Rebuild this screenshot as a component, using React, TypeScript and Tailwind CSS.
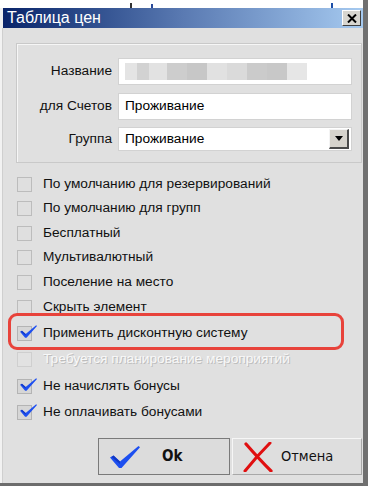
import React from "react";

type Row = { label: string; checked?: boolean; disabled?: boolean; mt: string };

const rows: Row[] = [
  { label: "По умолчанию для резервирований", mt: "mt-0" },
  { label: "По умолчанию для групп", mt: "mt-0" },
  { label: "Бесплатный", mt: "mt-px" },
  { label: "Мультивалютный", mt: "mt-0" },
  { label: "Поселение на место", mt: "mt-px" },
  { label: "Скрыть элемент", mt: "mt-px" },
  { label: "Применить дисконтную систему", checked: true, mt: "mt-[2px]" },
  { label: "Требуется планирование мероприятий", disabled: true, mt: "mt-[2px]" },
  { label: "Не начислять бонусы", checked: true, mt: "mt-[3px]" },
  { label: "Не оплачивать бонусами", checked: true, mt: "mt-[2px]" },
];

// blurred-out name in the first field
const blur = [
  { w: "w-[12px]", c: "bg-[#e4e4e4]" },
  { w: "w-[12px]", c: "bg-[#d2d2d2]" },
  { w: "w-[18px]", c: "bg-[#e2e2e2]" },
  { w: "w-[20px]", c: "bg-[#cdcdcd]" },
  { w: "w-[20px]", c: "bg-[#c7c7c7]" },
  { w: "w-[20px]", c: "bg-[#e1e1e1]" },
  { w: "w-[20px]", c: "bg-[#dadada]" },
  { w: "w-[20px]", c: "bg-[#cbcbcb]" },
  { w: "w-[20px]", c: "bg-[#c8c8c8]" },
  { w: "w-[20px]", c: "bg-[#e6e6e6]" },
];

function Tick({ className }: { className?: string }) {
  return (
    <svg viewBox="0 0 30 22" className={className}>
      <path d="M0 11.5 L3.5 9.5 L10 15.5 L28.5 0 L30 1.2 L11.5 22 L9 22 Z" fill="#1d4ff0" />
      <path d="M3.5 9.5 L10 15.5 L10 18 L1.5 11 Z" fill="#1238c4" />
    </svg>
  );
}

function CheckBox({ checked, disabled }: { checked?: boolean; disabled?: boolean }) {
  return (
    <div
      className={
        "relative w-[15px] h-[15px] shrink-0 border " +
        (disabled ? "border-[#cfcfcf] bg-[#e2e2e2]" : checked ? "border-[#b4b4b4] bg-[#d6d6d6]" : "border-[#bcbcbc] bg-[#dfdfdf]")
      }
    >
      {checked && <Tick className="absolute left-[2px] top-[-3px] w-[17px] h-[15px]" />}
    </div>
  );
}

function Field({ children }: { children?: React.ReactNode }) {
  return (
    <div className="w-[234px] h-[27px] bg-white border border-[#d2d2d2] flex items-center pl-[6px] text-[13.7px] text-black">
      {children}
    </div>
  );
}

export default function App() {
  return (
    <div className="relative w-[368px] h-[486px] bg-white overflow-hidden font-['Liberation_Sans','DejaVu_Sans',sans-serif]">
      <div className="flex h-full">
        <div className="flex-1 flex flex-col">
          {/* strip of the screen above the dialog */}
          <div className="h-[8px] bg-white relative">
            <div className="absolute left-[130px] top-[3px] w-[2px] h-[5px] bg-[#333]" />
            <div className="absolute left-[151px] top-[4px] w-[2px] h-[4px] bg-[#2a4a9a]" />
            <div className="absolute left-[331px] top-[3px] w-[2px] h-[5px] bg-[#1d4fa8]" />
          </div>

          <div className="flex-1 flex flex-col">
            {/* title bar */}
            <div className="flex">
              <div className="w-[3px] bg-[#efefef]" />
              <div className="flex-1 h-[20px] flex items-center justify-between pl-[4px] pr-[2px] bg-gradient-to-r from-[#0a246a] via-[#5a7ab2] to-[#a6caf0]">
                <span className="text-white text-[16px] leading-none">Таблица цен</span>
                <div className="w-[19px] h-[16px] bg-[#d8d6d0] border-t border-l border-t-white border-l-white border-b border-r border-b-[#404040] border-r-[#404040] flex items-center justify-center">
                  <svg viewBox="0 0 10 9" className="w-[10px] h-[9px]">
                    <path d="M1 0.5 L9 8.5 M9 0.5 L1 8.5" stroke="#000" strokeWidth="2" />
                  </svg>
                </div>
              </div>
            </div>

            {/* body */}
            <div className="flex-1 flex bg-[#e0e0e0]">
              <div className="w-[3px] bg-[#f2f2f2] border-r border-[#cfcfcf]" />
              <div className="flex-1 flex flex-col">
                {/* group box */}
                <div className="mt-[15px] ml-[13px] mr-[1px] h-[120px] border border-[#c9c9c9] shadow-[inset_1px_1px_0_#f6f6f6] pt-[14px] pr-[9px] flex flex-col gap-[7px]">
                  <div className="flex items-center gap-[6px]">
                    <div className="w-[95px] text-right text-[13.7px] text-[#111]">Название</div>
                    <Field>
                      <div className="flex h-[17px]">
                        {blur.map((b, i) => (
                          <div key={i} className={b.w + " h-full " + b.c} />
                        ))}
                      </div>
                    </Field>
                  </div>
                  <div className="flex items-center gap-[6px] mt-px">
                    <div className="w-[95px] text-right text-[13.7px] text-[#111]">для Счетов</div>
                    <Field>Проживание</Field>
                  </div>
                  <div className="flex items-center gap-[6px]">
                    <div className="w-[95px] text-right text-[13.7px] text-[#111]">Группа</div>
                    <div className="w-[234px] h-[24px] bg-white border border-[#d2d2d2] flex items-center justify-between pl-[6px] pr-[2px] text-[13.7px] text-black">
                      <span>Проживание</span>
                      <div className="w-[20px] h-[20px] bg-[#d6d3cc] border-t border-l border-t-[#f4f4f4] border-l-[#f4f4f4] border-b-2 border-r-2 border-b-[#4a4a4a] border-r-[#4a4a4a] flex items-center justify-center">
                        <svg viewBox="0 0 8 5" className="w-[8px] h-[5px]">
                          <path d="M0 0 H8 L4 5 Z" fill="#000" />
                        </svg>
                      </div>
                    </div>
                  </div>
                </div>

                {/* options */}
                <div className="mt-[9px] flex flex-col">
                  {rows.map((r) => (
                    <div key={r.label} className={"h-[24px] flex items-center pl-[14px] gap-[11px] " + r.mt}>
                      <CheckBox checked={r.checked} disabled={r.disabled} />
                      <span
                        className={
                          "text-[13.7px] " +
                          (r.disabled ? "text-[#f8f8f8] [text-shadow:1px_1px_0_#bdbdbd]" : "text-[#111]")
                        }
                      >
                        {r.label}
                      </span>
                    </div>
                  ))}
                </div>

                {/* buttons */}
                <div className="mt-[14px] flex justify-end gap-[2px] pr-[1px]">
                  <button className="w-[132px] h-[37px] bg-[#dcdcdc] border border-[#7a7a7a] flex items-center pl-[11px]">
                    <Tick className="w-[30px] h-[22px]" />
                    <span className="ml-[22px] text-[15px] font-bold text-[#111] font-['Liberation_Sans_Narrow','DejaVu_Sans_Condensed',sans-serif]">
                      Ok
                    </span>
                  </button>
                  <button className="w-[130px] h-[37px] bg-[#dedede] border-t border-l border-t-[#f6f6f6] border-l-[#f6f6f6] border-b border-r border-b-[#a8a8a8] border-r-[#a8a8a8] flex items-center pl-[10px]">
                    <svg viewBox="0 0 30 30" className="w-[30px] h-[30px]">
                      <path d="M3 2 C10 10 18 19 28 29" stroke="#e00f10" strokeWidth="3.2" fill="none" strokeLinecap="round" />
                      <path d="M27 1 C19 9 10 19 2 29" stroke="#e00f10" strokeWidth="3" fill="none" strokeLinecap="round" />
                    </svg>
                    <span className="ml-[8px] text-[14.5px] text-[#111] font-['Liberation_Sans_Narrow','DejaVu_Sans_Condensed',sans-serif]">
                      Отмена
                    </span>
                  </button>
                </div>
              </div>
            </div>
            <div className="h-[3px] bg-[#6c6c6c]" />
          </div>
        </div>
        <div className="w-[5px] bg-[#707070]" />
      </div>

      {/* red highlight annotation */}
      <div className="absolute left-[8px] top-[313px] w-[336px] h-[37px] border-[3.5px] border-[#e8433b] rounded-[9px]" />
    </div>
  );
}
